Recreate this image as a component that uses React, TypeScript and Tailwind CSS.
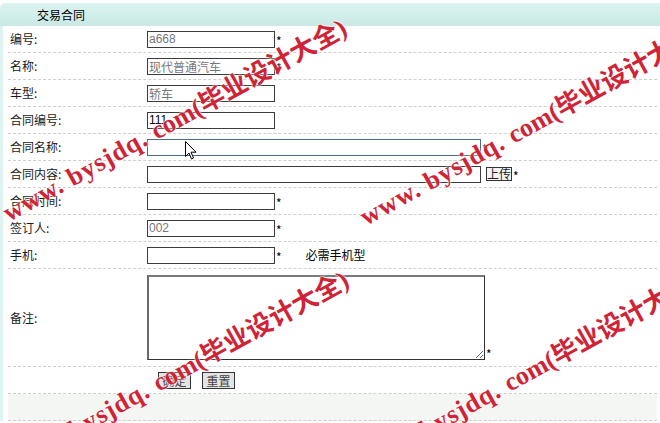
import React from 'react';

const inputBase =
  "h-[17px] border border-[#3c3c3c] bg-white px-[1px] font-['Liberation_Sans','Noto_Sans_CJK_SC',sans-serif] text-[12px] leading-[15px] text-[#777] outline-none";

function Row({ label, children, className = '' }: { label: string; children?: React.ReactNode; className?: string }) {
  return (
    <div className={`flex h-[27px] items-center border-b border-dashed border-[#cfcfcf] ${className}`}>
      <div className="w-[139px] shrink-0 pl-[2px]">{label}</div>
      <div className="flex items-center">{children}</div>
    </div>
  );
}

function Star() {
  return <span className="ml-[1px] mt-[4px] text-[12px] leading-none text-black">*</span>;
}

const marks = [
  'left-[5px] top-[200px]',
  'left-[362px] top-[204px]',
  'left-[7px] top-[452px]',
  'left-[358px] top-[452px]',
];

export default function App() {
  return (
    <div className="relative h-[423px] w-[660px] overflow-hidden bg-white font-['Noto_Sans_CJK_SC','Noto_Sans',sans-serif] text-[12px] text-[#1a1a1a]">
      <div className="mt-[3px] flex h-[23px] items-center rounded-tl-[5px] bg-[linear-gradient(180deg,#dcf3f0,#c9e9e4)] pl-[37px] text-black">
        交易合同
      </div>
      <div className="border-l-[3px] border-[#def3f2] pl-[5px] pr-[3px]">
        <Row label="编号:">
          <input readOnly className={`${inputBase} w-[128px]`} defaultValue="a668" />
          <Star />
        </Row>
        <Row label="名称:">
          <input readOnly className={`${inputBase} w-[128px]`} defaultValue="现代普通汽车" />
          <Star />
        </Row>
        <Row label="车型:">
          <input readOnly className={`${inputBase} w-[128px]`} defaultValue="轿车" />
        </Row>
        <Row label="合同编号:">
          <input className={`${inputBase} w-[128px] bg-[#ffffbf] text-black`} defaultValue="111" />
        </Row>
        <Row label="合同名称:">
          <input className={`${inputBase} w-[334px] border-[#4a6a8c]`} />
          <Star />
        </Row>
        <Row label="合同内容:">
          <input className={`${inputBase} w-[334px]`} />
          <button className="ml-[5px] h-[14px] w-[26px] border border-[#333] bg-[#f4f4f4] text-[12px] leading-[12px] text-[#222]">
            上传
          </button>
          <Star />
        </Row>
        <Row label="合同时间:">
          <input className={`${inputBase} w-[128px]`} />
          <Star />
        </Row>
        <Row label="签订人:">
          <input readOnly className={`${inputBase} w-[128px]`} defaultValue="002" />
          <Star />
        </Row>
        <Row label="手机:">
          <input className={`${inputBase} w-[128px]`} />
          <Star />
          <span className="ml-[24px] text-black">必需手机型</span>
        </Row>
        <div className="flex h-[98px] items-center border-b border-dashed border-[#cfcfcf]">
          <div className="w-[139px] shrink-0 pl-[2px]">备注:</div>
          <div className="flex items-end">
            <textarea className="h-[85px] w-[338px] border border-[#333] border-t-2 border-l-2 border-t-[#7a7a7a] border-l-[#6a6a6a] bg-white outline-none" />
            <span className="ml-[1px] text-[12px] leading-[12px] text-black">*</span>
          </div>
        </div>
        <div className="flex h-[27px] items-center gap-[11px] border-b border-dashed border-[#cfcfcf] pl-[150px]">
          <button className="h-[17px] w-[33px] border border-[#333] bg-[#e4e4e4] text-[12px] leading-[13px] text-[#444]">确定</button>
          <button className="h-[17px] w-[33px] border border-[#333] bg-[#e4e4e4] text-[12px] leading-[13px] text-[#444]">重置</button>
        </div>
        <div className="h-[27px] border-b border-dashed border-[#cfcfcf] bg-[#f3f6f3]" />
      </div>

      {/* mouse pointer */}
      <svg className="absolute left-[185px] top-[141px]" width="12" height="19" viewBox="0 0 12 19">
        <path d="M0.5 0.5 L0.5 15.5 L4 12 L6.5 18 L8.5 17 L6 11.2 L11 11.2 Z" fill="#fff" stroke="#000" strokeWidth="1" />
      </svg>

      {/* watermark */}
      {marks.map((pos) => (
        <div
          key={pos}
          className={`pointer-events-none absolute ${pos} origin-left -rotate-[29deg] whitespace-nowrap font-['Liberation_Serif','Noto_Sans_CJK_SC',serif] text-[26px] font-bold leading-[30px] text-[#d02436] [text-shadow:0_0_2px_#fff,0_0_2px_#fff]`}
        >
          <span className="tracking-[1px]">www. bysjdq. </span>
          com(毕业设计大全)
        </div>
      ))}
    </div>
  );
}
